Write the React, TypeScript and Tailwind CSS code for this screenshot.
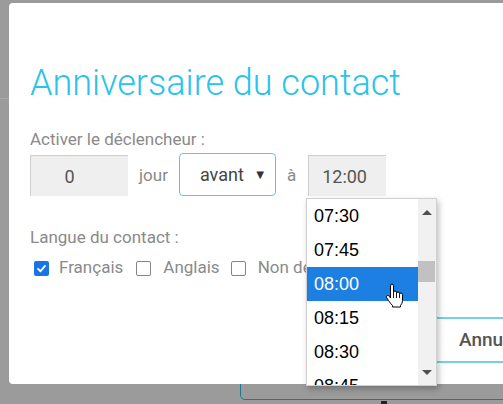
import { useState } from 'react'

const times = ['07:30', '07:45', '08:00', '08:15', '08:30', '08:45', '09:00']

function HandCursor() {
  return (
    <svg width="19" height="25" viewBox="0 0 19 25" className="block">
      <path
        d="M5.5 3 Q5.5 1 7 1 Q8.5 1 8.5 3 L8.5 9.5 Q8.5 8 10 8 Q11.5 8 11.5 9.5 L11.5 10.5 Q11.5 9 13 9 Q14.5 9 14.5 10.5 L14.5 11.5 Q14.5 10 16 10 Q17.5 10 17.5 11.5 L17.5 17.5 Q17.5 20.5 15.5 22.5 L15.5 24 L7.5 24 L7.5 22.5 Q5.5 20.5 3.5 17.5 L1.5 14.5 Q1 13 2.5 12.5 Q3.5 12.3 4.5 13.5 L5.5 15 Z"
        fill="#fff"
        stroke="#000"
        strokeWidth="1"
        strokeLinejoin="round"
      />
      <path d="M8.5 9.5 V15 M11.5 10.5 V15 M14.5 11.5 V15" stroke="#000" strokeWidth="0.9" />
    </svg>
  )
}

function Checkbox({ checked }: { checked?: boolean }) {
  if (checked) {
    return (
      <span className="flex h-[15px] w-[15px] shrink-0 items-center justify-center rounded-[2px] bg-[#1a73e8]">
        <svg width="11" height="11" viewBox="0 0 12 12">
          <path d="M2.2 6.3 L4.9 9 L9.8 3.2" fill="none" stroke="#fff" strokeWidth="2" strokeLinecap="round" strokeLinejoin="round" />
        </svg>
      </span>
    )
  }
  return <span className="block h-[15px] w-[15px] shrink-0 rounded-[2px] border-[1.5px] border-[#858585] bg-white" />
}

export default function App() {
  const [selected] = useState('08:00')

  return (
    <div className="relative h-[404px] w-[503px] overflow-hidden bg-[#9b9b9b] font-['Roboto',sans-serif]">
      {/* page behind the backdrop */}
      <div className="absolute left-0 top-[98px] h-px w-full bg-[#a9a9a9]" />
      <div className="absolute left-[240px] top-[340px] h-[60px] w-[300px] rounded-[5px] border-[1.5px] border-[#1f7890]" />
      <div className="absolute left-[381px] top-[401px] h-[3px] w-[6px] bg-[#222]" />

      {/* modal */}
      <div className="absolute left-[9px] top-[3px] h-[381px] w-[540px] rounded-[4px] bg-white pl-[21px] pt-[59px]">
        <h2 className="text-[36px] font-light leading-[42px] text-[#2bc3ea]">Anniversaire du contact</h2>

        <div className="mt-[25px] text-[17px] leading-[20px] text-[#8a8a8a]">Activer le déclencheur :</div>

        <div className="mt-[4px] flex items-end">
          <div className="flex h-[41px] w-[98px] items-center justify-center border-l border-t border-[#cdcdcd] bg-[#efefef] pr-[20px] text-[18px] text-[#555]">
            0
          </div>
          <span className="ml-[11px] self-center pt-[2px] text-[17px] text-[#8a8a8a]">jour</span>
          <div className="ml-[11px] flex h-[43px] w-[97px] items-center rounded-[4px] border border-[#5cc8e7] pl-[20px] text-[18px] text-[#444]">
            <span>avant</span>
            <span className="ml-[10px] text-[13px] text-[#333]">▼</span>
          </div>
          <span className="ml-[11px] self-center pt-[2px] text-[17px] text-[#8a8a8a]">à</span>
          <div className="ml-[12px] flex h-[41px] w-[78px] items-center border-l border-t border-[#cdcdcd] bg-[#efefef] pl-[13px] text-[18px] text-[#555]">
            12:00
          </div>
        </div>

        <div className="mt-[31px] text-[17px] leading-[20px] text-[#8a8a8a]">Langue du contact :</div>

        <div className="mt-[11px] flex h-[20px] items-center pl-[4px] text-[17px] text-[#8a8a8a]">
          <Checkbox checked />
          <span className="ml-[10px]">Français</span>
          <span className="ml-[13px] flex">
            <Checkbox />
          </span>
          <span className="ml-[12px]">Anglais</span>
          <span className="ml-[11px] flex">
            <Checkbox />
          </span>
          <span className="ml-[12px] whitespace-nowrap">Non defini</span>
        </div>

        <div className="mt-[39px] flex">
          <button className="ml-[390px] flex h-[46px] w-[140px] items-center rounded-[4px] border-2 border-[#74d1ec] pl-[37px] text-[19px] font-medium text-[#555]">
            Annuler
          </button>
        </div>
      </div>

      {/* open time list */}
      <div className="absolute left-[306px] top-[198px] flex h-[188px] w-[131px] overflow-hidden border border-[#d0d0d0] bg-white shadow-[2px_3px_6px_rgba(0,0,0,0.25)]">
        <ul className="flex-1 font-['Liberation_Sans',sans-serif]">
          {times.map((t) => (
            <li
              key={t}
              className={
                t === selected
                  ? 'flex h-[34px] items-center bg-[#1e7fe3] pl-[7px] text-[18px] text-white'
                  : 'flex h-[34px] items-center pl-[7px] text-[18px] text-black'
              }
            >
              {t}
            </li>
          ))}
        </ul>
        <div className="flex w-[18px] flex-col bg-[#f1f1f1]">
          <div className="flex h-[24px] items-center justify-center pt-[2px]">
            <span className="h-0 w-0 border-x-[5px] border-b-[5px] border-x-transparent border-b-[#505050]" />
          </div>
          <div className="mt-[38px] h-[21px] w-[17px] bg-[#c1c1c1]" />
          <div className="flex-1" />
          <div className="flex h-[24px] items-center justify-center pb-[2px]">
            <span className="h-0 w-0 border-x-[5px] border-t-[5px] border-x-transparent border-t-[#505050]" />
          </div>
        </div>
      </div>

      {/* mouse pointer */}
      <div className="absolute left-[385px] top-[283px]">
        <HandCursor />
      </div>
    </div>
  )
}
